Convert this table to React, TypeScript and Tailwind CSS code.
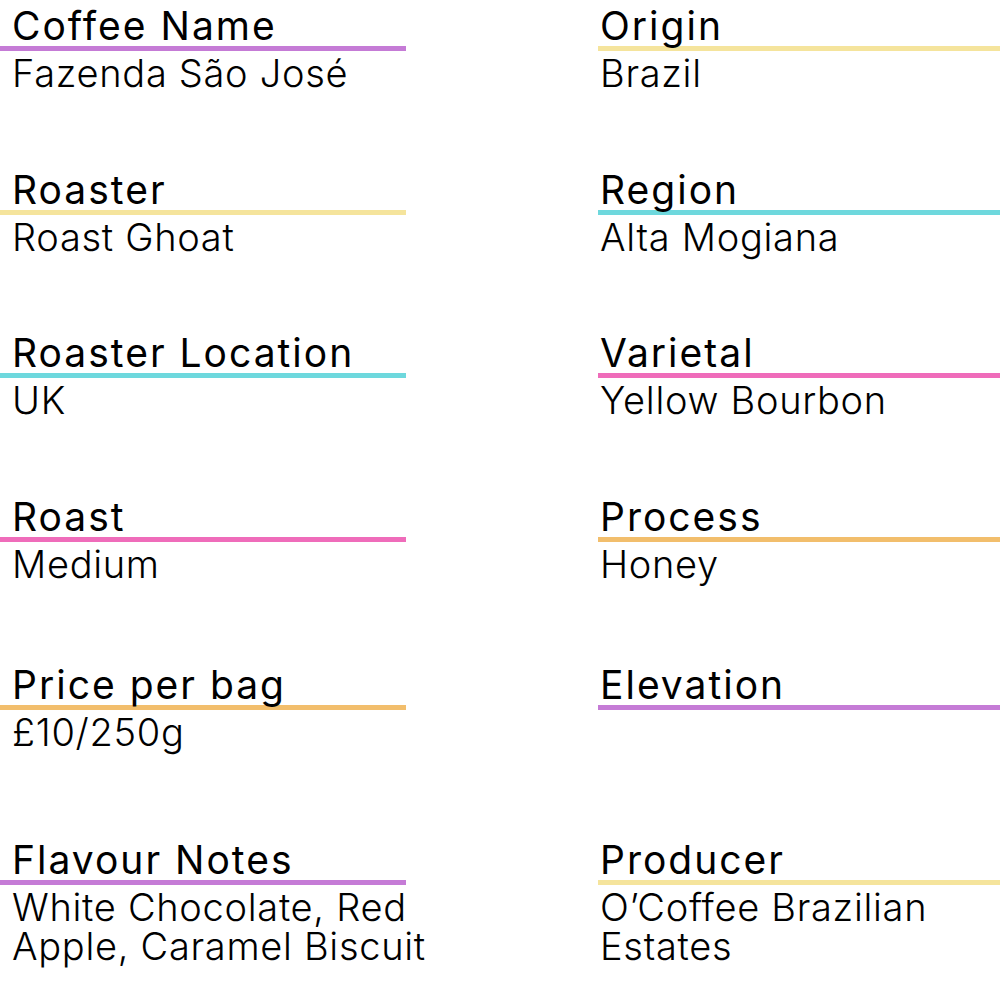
import React from 'react'

type Field = { label: string; value: string; bar: string }

const rows: { height: string; left: Field; right: Field }[] = [
    {
        height: 'h-[164px]',
        left: { label: 'Coffee Name', value: 'Fazenda São José', bar: 'bg-[#c57bd6]' },
        right: { label: 'Origin', value: 'Brazil', bar: 'bg-[#f5e49c]' },
    },
    {
        height: 'h-[163px]',
        left: { label: 'Roaster', value: 'Roast Ghoat', bar: 'bg-[#f5e49c]' },
        right: { label: 'Region', value: 'Alta Mogiana', bar: 'bg-[#6ed8dd]' },
    },
    {
        height: 'h-[164px]',
        left: { label: 'Roaster Location', value: 'UK', bar: 'bg-[#6ed8dd]' },
        right: { label: 'Varietal', value: 'Yellow Bourbon', bar: 'bg-[#ef6cba]' },
    },
    {
        height: 'h-[168px]',
        left: { label: 'Roast', value: 'Medium', bar: 'bg-[#ef6cba]' },
        right: { label: 'Process', value: 'Honey', bar: 'bg-[#f2be6c]' },
    },
    {
        height: 'h-[175px]',
        left: { label: 'Price per bag', value: '£10/250g', bar: 'bg-[#f2be6c]' },
        right: { label: 'Elevation', value: '', bar: 'bg-[#c57bd6]' },
    },
    {
        height: '',
        left: { label: 'Flavour Notes', value: 'White Chocolate, Red\nApple, Caramel Biscuit', bar: 'bg-[#c57bd6]' },
        right: { label: 'Producer', value: 'O’Coffee Brazilian\nEstates', bar: 'bg-[#f5e49c]' },
    },
]

const Cell: React.FC<{ field: Field; pad: string }> = ({ field, pad }) => {
    return (
        <div>
            <div className={`pt-[6px] text-[39px] leading-[40px] font-normal tracking-[2px] whitespace-nowrap text-black ${pad}`}>{field.label}</div>
            <div className={`h-[5px] w-full ${field.bar}`} />
            <div className={`mt-[3px] min-h-[40px] text-[38px] leading-[39px] font-light tracking-[0.7px] whitespace-pre text-black ${pad}`}>{field.value}</div>
        </div>
    )
}

export default function App() {
    return (
        <div className="h-[1000px] w-[1000px] overflow-hidden bg-white font-['Inter',sans-serif]">
            {rows.map((row) => (
                <div key={row.left.label} className={`flex ${row.height}`}>
                    <div className="w-[406px]">
                        <Cell field={row.left} pad="pl-[12px]" />
                    </div>
                    <div className="ml-[192px] w-[402px]">
                        <Cell field={row.right} pad="pl-[2px]" />
                    </div>
                </div>
            ))}
        </div>
    )
}
